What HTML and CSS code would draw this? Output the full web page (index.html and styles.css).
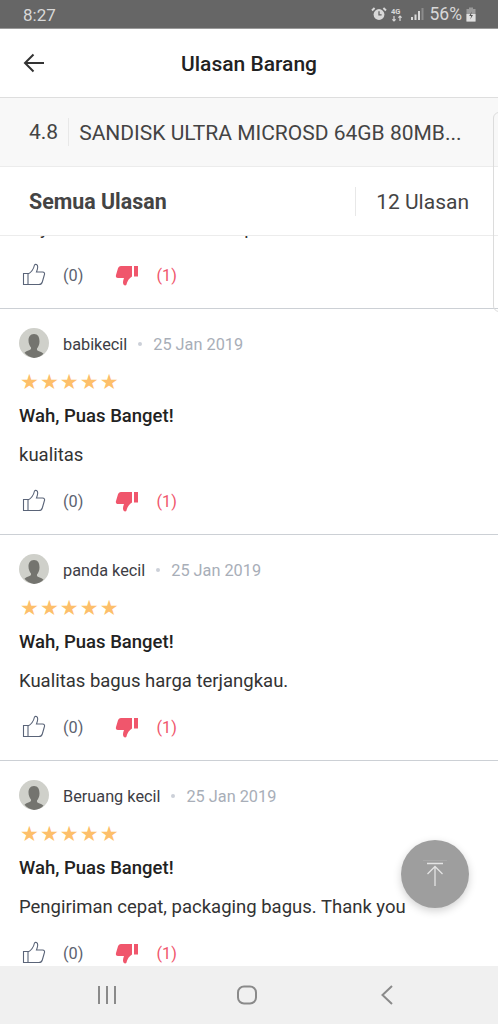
FILE: index.html
```html
<html>
<head>
<meta charset="utf-8">
<link rel="stylesheet" href="styles.css">
</head>
<body>
	<div id="phone">
		<div class="status-bar">
			<span class="status-time">8:27</span>
			<div class="status-icons">
				<svg class="alarm" width="16" height="16" viewBox="0 0 16 16"><circle cx="8" cy="8.5" r="5.400" fill="#d8d8d8"/><path d="M1 4.500 3.600 2M15 4.500 12.400 2" stroke="#d8d8d8" stroke-width="2" fill="none"/><path d="M8 5.200v3.600h2.600" stroke="#666" stroke-width="1.300" fill="none"/></svg>
				<svg width="12" height="15" viewBox="0 0 12 15"><path d="M3 9v5M1.400 12.400 3 14l1.600-1.600M9 14V9M7.400 10.600 9 9l1.600 1.600" stroke="#d8d8d8" stroke-width="1.200" fill="none"/><text x="0" y="7" class="net-label">4G</text></svg>
				<svg width="14" height="14" viewBox="0 0 14 14"><rect x="1" y="10" width="2" height="3" fill="#d8d8d8"/><rect x="4.500" y="7.500" width="2" height="5.500" fill="#d8d8d8"/><rect x="8" y="4" width="2" height="9" fill="#d8d8d8"/><rect x="11.500" y="1" width="2" height="12" fill="#8c8c8c"/></svg>
				<span class="status-pct">56%</span>
				<svg width="10" height="15" viewBox="0 0 10 15"><rect x="3" y="0.500" width="4" height="2" fill="#9a9a9a"/><rect x="0.500" y="2" width="9" height="12.500" fill="#9a9a9a"/><rect x="0.500" y="7" width="9" height="7.500" fill="#e0e0e0"/><path d="M5.800 4.500 3.200 9h2l-1 3.600L7 8H5z" fill="#555"/></svg>
			</div>
		</div>

		<div class="header">
			<svg class="back-icon" width="24" height="24" viewBox="0 0 24 24"><path d="M22 12H3.500M11.500 3.500 3 12l8.500 8.500" stroke="#333" stroke-width="2" fill="none"/></svg>
			<h1>Ulasan Barang</h1>
		</div>

		<div class="product-bar">
			<span class="product-rate">4.8</span>
			<span class="product-name">SANDISK ULTRA MICROSD 64GB 80MB...</span>
		</div>

		<div class="summary-bar">
			<span class="summary-title">Semua Ulasan</span>
			<span class="summary-count">12 Ulasan</span>
		</div>

		<div class="review-list">
			<div class="review review-cut">
				<p class="review-text">Saya beli ini buat kamera tapi</p>
				<div class="votes">
					<svg class="thumb" width="24" height="24" viewBox="0 0 24 24"><use href="#thumb-up"/></svg>
					<span class="count-up">(0)</span>
					<svg class="thumb thumb-down" width="24" height="24" viewBox="0 0 24 24"><use href="#thumb-down"/></svg>
					<span class="count-down">(1)</span>
				</div>
			</div>

			<div class="review">
				<div class="review-head">
					<svg class="avatar" width="30" height="30" viewBox="0 0 30 30"><use href="#avatar"/></svg>
					<span class="review-user">babikecil</span>
					<span class="review-dot"></span>
					<span class="review-date">25 Jan 2019</span>
				</div>
				<div class="stars">★★★★★</div>
				<h3>Wah, Puas Banget!</h3>
				<p class="review-text">kualitas</p>
				<div class="votes">
					<svg class="thumb" width="24" height="24" viewBox="0 0 24 24"><use href="#thumb-up"/></svg>
					<span class="count-up">(0)</span>
					<svg class="thumb thumb-down" width="24" height="24" viewBox="0 0 24 24"><use href="#thumb-down"/></svg>
					<span class="count-down">(1)</span>
				</div>
			</div>

			<div class="review">
				<div class="review-head">
					<svg class="avatar" width="30" height="30" viewBox="0 0 30 30"><use href="#avatar"/></svg>
					<span class="review-user">panda kecil</span>
					<span class="review-dot"></span>
					<span class="review-date">25 Jan 2019</span>
				</div>
				<div class="stars">★★★★★</div>
				<h3>Wah, Puas Banget!</h3>
				<p class="review-text">Kualitas bagus harga terjangkau.</p>
				<div class="votes">
					<svg class="thumb" width="24" height="24" viewBox="0 0 24 24"><use href="#thumb-up"/></svg>
					<span class="count-up">(0)</span>
					<svg class="thumb thumb-down" width="24" height="24" viewBox="0 0 24 24"><use href="#thumb-down"/></svg>
					<span class="count-down">(1)</span>
				</div>
			</div>

			<div class="review">
				<div class="review-head">
					<svg class="avatar" width="30" height="30" viewBox="0 0 30 30"><use href="#avatar"/></svg>
					<span class="review-user">Beruang kecil</span>
					<span class="review-dot"></span>
					<span class="review-date">25 Jan 2019</span>
				</div>
				<div class="stars">★★★★★</div>
				<h3>Wah, Puas Banget!</h3>
				<p class="review-text">Pengiriman cepat, packaging bagus. Thank you</p>
				<div class="votes">
					<svg class="thumb" width="24" height="24" viewBox="0 0 24 24"><use href="#thumb-up"/></svg>
					<span class="count-up">(0)</span>
					<svg class="thumb thumb-down" width="24" height="24" viewBox="0 0 24 24"><use href="#thumb-down"/></svg>
					<span class="count-down">(1)</span>
				</div>
			</div>
		</div>

		<div class="nav-bar">
			<svg width="20" height="20" viewBox="0 0 20 20"><path d="M2 1v18M10 1v18M18 1v18" stroke="#8a8a8a" stroke-width="2" fill="none"/></svg>
			<svg width="20" height="20" viewBox="0 0 20 20"><rect x="1" y="1.500" width="18" height="17" rx="6" stroke="#8a8a8a" stroke-width="2" fill="none"/></svg>
			<svg width="20" height="20" viewBox="0 0 20 20"><path d="M15 1 5.500 10l9.500 9" stroke="#8a8a8a" stroke-width="2" fill="none"/></svg>
		</div>

		<div class="side-card"></div>

		<div class="to-top">
			<svg width="24" height="28" viewBox="0 0 24 28"><path d="M0 .5h24" stroke="#a8a8a8" stroke-width="1" fill="none"/><path d="M4 3.500h16M12 26V6M4.500 14 12 6.500l7.500 7.500" stroke="#e4e4e4" stroke-width="1.300" fill="none"/></svg>
		</div>
	</div>

	<svg width="0" height="0" class="icon-defs">
		<symbol id="thumb-up" viewBox="0 0 24 24">
			<path d="M1.500 10.500h4.500v11H1.500zM6 11c3-1.500 5.500-4.500 6.500-9 1-1.200 3.200-.5 3.200 2 0 2-.7 3.700-1.200 5h6c2 0 2.500 1.600 1.800 3l-2 7c-.5 1.700-1.500 2.500-3.300 2.500H6" fill="none" stroke="#5a6478" stroke-width="1.100"/>
		</symbol>
		<symbol id="thumb-down" viewBox="0 0 24 24">
			<path d="M17 3H6C4.300 3 3.500 4 3 5.300L1 12c-.6 1.700.4 3 2 3h6c-.4 1.400-1 2.700-1 4.500 0 2.500 2 3.500 3.300 2.500 1-4 3-7 5.700-8.500zM19 3h4v10.500h-4z" fill="#f0566c"/>
		</symbol>
		<symbol id="avatar" viewBox="0 0 30 30">
			<circle cx="15" cy="15" r="15" fill="#cfd0ca"/>
			<path d="M15 6c-4 0-5.500 3-5.500 6.500 0 3 1.200 5.500 2.500 7 .3 1.500-.3 2.200-2 2.800-1.800.6-3.500 1.200-4.500 2.500A15 15 0 0 0 15 30a15 15 0 0 0 9.500-4.200c-1-1.300-2.700-1.900-4.500-2.500-1.700-.6-2.300-1.300-2-2.800 1.300-1.500 2.500-4 2.500-7C20.500 9 19 6 15 6z" fill="#74746f"/>
		</symbol>
	</svg>
</body>
</html>
```

FILE: styles.css
```css
body {
	margin: 0;
	font-family: Roboto, "Liberation Sans", sans-serif;
	background: #fff;
}
p, h1, h3 {
	margin: 0;
}
#phone {
	position: relative;
	width: 498px;
	height: 1024px;
	overflow: hidden;
	display: flex;
	flex-direction: column;
}
.icon-defs {
	position: absolute;
}

.status-bar {
	height: 28px;
	flex: none;
	background: #666;
	border-bottom: 1px solid #9a9a9a;
	display: flex;
	align-items: center;
	justify-content: space-between;
	padding: 0 22px 0 23px;
	color: #d8d8d8;
}
.status-time {
	font-size: 17px;
	padding-top: 2px;
}
.status-icons {
	display: flex;
	align-items: center;
	gap: 7px;
}
.alarm {
	margin-right: -3px;
}
.status-pct {
	font-size: 17.5px;
	margin: 0 -3px 0 -1px;
}
.net-label {
	font-size: 7.5px;
	font-weight: 700;
	fill: #d8d8d8;
}

.header {
	height: 68px;
	flex: none;
	background: #fff;
	border-bottom: 1px solid #dedede;
	display: flex;
	align-items: center;
	justify-content: center;
	position: relative;
}
.header h1 {
	font-size: 21px;
	font-weight: 500;
	color: #222;
	padding-top: 2px;
}
.back-icon {
	position: absolute;
	left: 22px;
	top: 22px;
}

.product-bar {
	height: 68px;
	flex: none;
	background: #f8f8f8;
	border-bottom: 1px solid #ececec;
	display: flex;
	align-items: center;
	padding-left: 29px;
	font-size: 21px;
	color: #444;
}
.product-rate {
	padding-right: 10px;
	margin-right: 10px;
	line-height: 28px;
	border-right: 1px solid #e8e8e8;
}
.product-name {
	padding-top: 2px;
}

.summary-bar {
	height: 68px;
	flex: none;
	border-bottom: 1px solid #ececec;
	display: flex;
	align-items: center;
	justify-content: space-between;
	padding: 0 29px;
	color: #444;
	font-size: 21px;
}
.summary-title {
	font-weight: 700;
	font-size: 21.4px;
}
.summary-count {
	padding: 1px 0 0 20px;
	line-height: 28px;
	border-left: 1px solid #e8e8e8;
	white-space: nowrap;
}

.review-list {
	flex: 1;
	min-height: 0;
	overflow: hidden;
}
.review {
	height: 206px;
	padding: 19px 19px 0;
	border-bottom: 1px solid #ccd0d5;
}
.review-cut {
	height: 91px;
	padding-top: 0;
	margin-top: -19px;
}
.review-cut .review-text {
	margin-top: 0;
}
.review-cut .votes {
	margin-top: 24px;
}
.review-head {
	display: flex;
	align-items: center;
	height: 30px;
	font-size: 16.3px;
}
.avatar {
	margin-right: 14px;
}
.review-user {
	color: #3d3d45;
	padding-top: 2px;
}
.review-dot {
	width: 4px;
	height: 4px;
	border-radius: 50%;
	background: #ccd0d8;
	margin: 2px 11px 0;
}
.review-date {
	color: #a8aeb8;
	padding-top: 2px;
}
.stars {
	margin-top: 14px;
	height: 20px;
	line-height: 20px;
	padding-left: 1px;
	font-family: "DejaVu Sans", sans-serif;
	font-size: 21px;
	letter-spacing: 1.100px;
	color: #fdbf6a;
}
.review h3 {
	margin-top: 13px;
	font-size: 18.5px;
	line-height: 22px;
	font-weight: 500;
	color: #222;
}
.review-text {
	margin-top: 17px;
	font-size: 18.5px;
	line-height: 22px;
	color: #333;
}
.votes {
	display: flex;
	align-items: center;
	margin-top: 23px;
	height: 24px;
	font-size: 16.3px;
}
.thumb {
	margin-left: 3px;
}
.count-up {
	margin-left: 17px;
	color: #5c6270;
}
.thumb-down {
	margin-left: 32px;
}
.count-down {
	margin-left: 17px;
	color: #f0566c;
}

.nav-bar {
	height: 58px;
	flex: none;
	background: #f0f0f0;
	display: flex;
	align-items: center;
	justify-content: center;
	gap: 120px;
	padding-right: 4px;
}

.side-card {
	position: absolute;
	right: -13px;
	top: 112px;
	width: 16px;
	height: 198px;
	border: 1px solid #dcdcdc;
	border-radius: 6px;
}
.to-top {
	position: absolute;
	left: 401px;
	top: 840px;
	width: 68px;
	height: 68px;
	border-radius: 50%;
	background: #9e9e9e;
	box-shadow: 0 3px 8px rgba(0, 0, 0, 0.18);
	display: flex;
	align-items: center;
	justify-content: center;
}
```
